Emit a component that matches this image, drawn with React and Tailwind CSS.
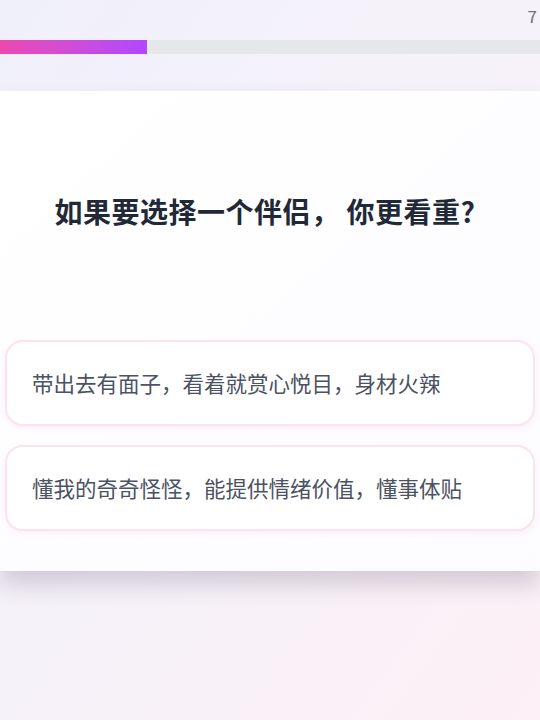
export default function App() {
  const progress = 27.3;
  const options = [
    "带出去有面子，看着就赏心悦目，身材火辣",
    "懂我的奇奇怪怪，能提供情绪价值，懂事体贴",
  ];

  return (
    <div
      className="min-h-[720px] w-full overflow-hidden bg-gradient-to-br from-[#f0f0fb] via-[#f6f2f9] to-[#fdf0f6]"
      style={{ fontFamily: '"Noto Sans CJK SC", "Noto Sans", sans-serif' }}
    >
      <div className="flex h-[40px] justify-end pr-[3px] pt-[5px]">
        <span className="text-[17px] leading-[22px] text-[#6b7280]">7</span>
      </div>

      <div className="h-[14px] w-full bg-[#e5e7eb]">
        <div
          className="h-full bg-gradient-to-r from-[#ec48b0] to-[#b146ff]"
          style={{ width: `${progress}%` }}
        />
      </div>

      <div className="mt-[37px] bg-gradient-to-br from-white to-[#fcfbff] px-[5px] pb-[40px] pt-[101px] shadow-[0_14px_22px_rgba(60,50,80,0.2)]">
        <h1 className="pr-[10px] text-center text-[28px] font-bold leading-[38px] tracking-[0.5px] text-[#1f2937]">
          如果要选择一个伴侣<span className="mr-[7px]">，</span>你更看重?
        </h1>

        <div className="mt-[110px] flex flex-col gap-[19px]">
          {options.map((o) => (
            <button
              key={o}
              className="flex h-[86px] w-full items-center rounded-[18px] border-2 border-[#fce4ef] bg-white pl-[25px] text-left text-[21.5px] text-[#4b5263] shadow-[0_2px_6px_rgba(236,72,153,0.08)]"
            >
              {o}
            </button>
          ))}
        </div>
      </div>
    </div>
  );
}
